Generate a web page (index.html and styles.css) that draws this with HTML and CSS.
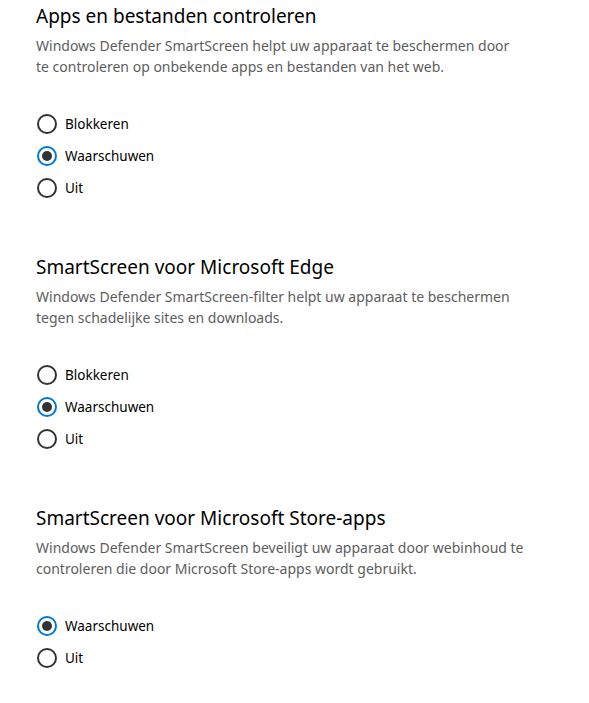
FILE: index.html
```html
<!DOCTYPE html>
<html lang="nl">
<head>
<meta charset="utf-8">
<link rel="stylesheet" href="styles.css">
</head>
<body>
<main class="page">
  <section class="group">
    <h2 class="title">Apps en bestanden controleren</h2>
    <p class="desc">Windows Defender SmartScreen helpt uw apparaat te beschermen door<br>te controleren op onbekende apps en bestanden van het web.</p>
    <div class="options">
      <label class="option"><span class="radio"></span><span class="label">Blokkeren</span></label>
      <label class="option"><span class="radio checked"></span><span class="label">Waarschuwen</span></label>
      <label class="option"><span class="radio"></span><span class="label">Uit</span></label>
    </div>
  </section>
  <section class="group">
    <h2 class="title">SmartScreen voor Microsoft Edge</h2>
    <p class="desc">Windows Defender SmartScreen-filter helpt uw apparaat te beschermen<br>tegen schadelijke sites en downloads.</p>
    <div class="options">
      <label class="option"><span class="radio"></span><span class="label">Blokkeren</span></label>
      <label class="option"><span class="radio checked"></span><span class="label">Waarschuwen</span></label>
      <label class="option"><span class="radio"></span><span class="label">Uit</span></label>
    </div>
  </section>
  <section class="group last">
    <h2 class="title">SmartScreen voor Microsoft Store-apps</h2>
    <p class="desc">Windows Defender SmartScreen beveiligt uw apparaat door webinhoud te<br>controleren die door Microsoft Store-apps wordt gebruikt.</p>
    <div class="options">
      <label class="option"><span class="radio checked"></span><span class="label">Waarschuwen</span></label>
      <label class="option"><span class="radio"></span><span class="label">Uit</span></label>
    </div>
  </section>
</main>
</body>
</html>
```
FILE: styles.css
```css
html, body {
  margin: 0;
  padding: 0;
  background: #ffffff;
}
body {
  font-family: "Noto Sans", "Open Sans", sans-serif;
  color: #000;
}
.page {
  padding: 2px 0 0 36px;
  display: flex;
  flex-direction: column;
}
.group {
  display: flex;
  flex-direction: column;
  height: 251px;
}
.group.last {
  height: auto;
}
.title {
  margin: 0;
  font-size: 19px;
  font-weight: 400;
  line-height: 28px;
  color: #000;
}
.desc {
  margin: 5px 0 0 0;
  font-size: 14px;
  line-height: 21px;
  color: #5d5d5d;
}
.options {
  margin-top: 31px;
  display: flex;
  flex-direction: column;
}
.option {
  display: flex;
  align-items: center;
  height: 32px;
  gap: 8px;
}
.radio {
  box-sizing: border-box;
  width: 20px;
  height: 20px;
  margin-left: 1px;
  border: 2px solid #333333;
  border-radius: 50%;
  display: flex;
  align-items: center;
  justify-content: center;
}
.radio.checked {
  border-color: #0078d7;
}
.radio.checked::after {
  content: "";
  width: 10px;
  height: 10px;
  border-radius: 50%;
  background: #333333;
}
.label {
  font-size: 13.5px;
  color: #000;
}
```
